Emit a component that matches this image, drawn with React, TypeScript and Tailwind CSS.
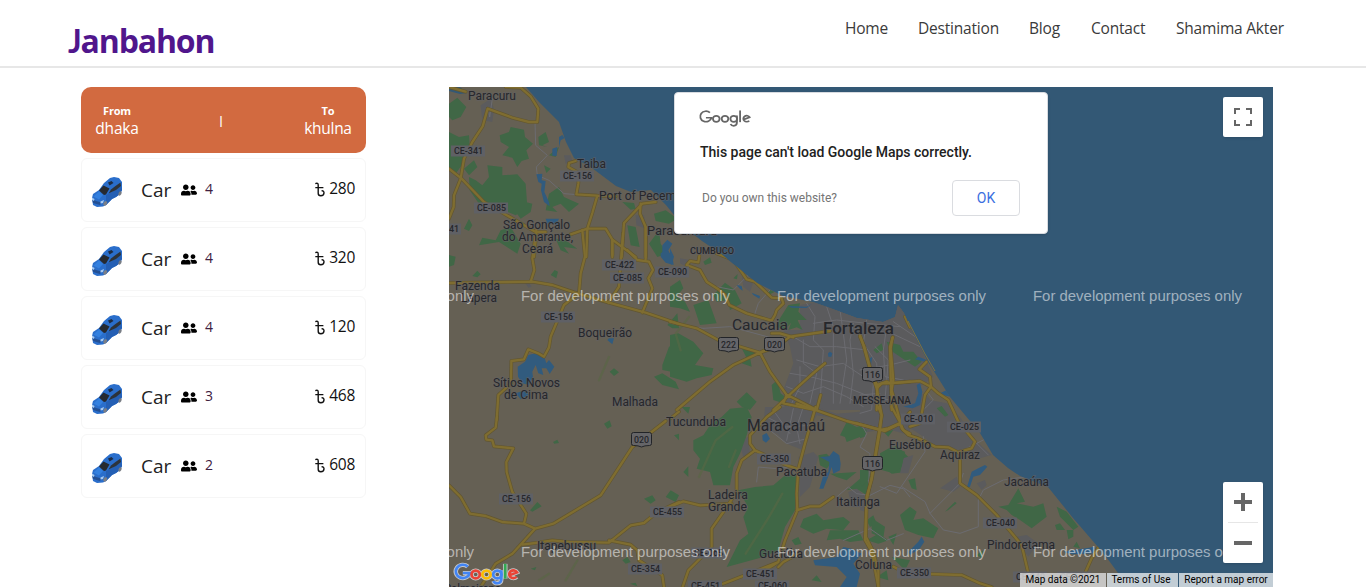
import { FaUserFriends } from "react-icons/fa";

const navItems = [
  { label: "Home", box: "w-[43px]" },
  { label: "Destination", box: "w-[81px]" },
  { label: "Blog", box: "w-8" },
  { label: "Contact", box: "w-[55px]" },
  { label: "Shamima Akter", box: "w-[108px]" },
];

const rides = [
  { seats: 4, price: 280 },
  { seats: 4, price: 320 },
  { seats: 4, price: 120 },
  { seats: 3, price: 468 },
  { seats: 2, price: 608 },
];

// Vector patches are stored at three units per map pixel, grouped by origin.
type Patch = { x: number; y: number; green: string[]; urban: string[]; water: string[]; minor: string[]; roads: string[] };

const patches: Patch[] = [
  {
    x: 0,
    y: 0,
    green: [
      "M0 50L25 32L52 60L35 90L10 100L0 90Z",
      "M0 135L30 150L60 145L62 175L45 225L20 260L0 240Z",
      "M152 145L180 135L185 120L225 128L228 150L252 170L232 190L240 215L218 222L205 240L190 212L160 205L180 180L155 165Z",
      "M45 245L75 220L85 240L60 265Z",
      "M115 235L160 240L160 265L205 262L230 290L235 360L200 385L170 372L130 355L90 350L62 310L60 270L80 280L100 295L120 270Z",
      "M268 150L290 135L300 165L280 175L295 180L270 175Z",
      "M300 205L330 180L320 210Z M285 235L305 245L292 258Z",
      "M300 320L330 300L345 330L390 350L360 375L335 350L310 360L325 375L290 370Z",
      "M200 375L230 345L250 350L245 375L215 395Z",
      "M155 430L185 420L215 470L205 500L150 465L90 475L100 452L140 460Z",
      "M45 425L60 395L70 415L60 432Z M320 455L350 460L385 485L345 480L360 500L335 490Z",
      "M520 345L555 348L560 365L545 368Z M535 415L560 420L572 480L545 475Z M615 380L650 370L685 395L660 410L620 402Z",
      "M600 470L630 430L635 470L655 500L625 510Z",
    ],
    urban: ["M95 55L125 35L135 65L130 105L100 100Z M345 205L365 205L370 225L350 230Z M560 385L585 385L592 425L562 415Z"],
    water: [
      "M330 150L340 144L347 153L335 160L330 180Z M310 185L325 180L323 207L310 206Z",
      "M262 262L280 260L278 280L290 282L286 315L300 345L302 358L285 345L276 310L278 290L268 285Z",
      "M640 475L655 458L670 470L658 490L665 510L640 510Z M290 395L330 395L325 405L335 425L315 408L295 410Z",
    ],
    minor: ["M258 105L260 175L295 205L262 240L265 265L300 280L345 320L385 323", "M118 65L122 90L130 35"],
    roads: [
      "M170 0L215 2L245 28L268 65L265 105L240 105L190 92L116 65L101 118L70 165L45 215L35 275L15 325L14 360L0 395",
      "M0 245L38 275L105 345L200 400L260 435L290 435",
      "M0 0L50 14",
      "M380 222L360 228L358 240L390 258L388 290L382 322L445 326L500 328",
      "M445 326L430 378L415 425L412 510",
      "M365 442L415 425L470 425L490 458L560 510",
      "M620 345L580 350L525 408L518 510",
      "M575 350L573 380L590 420L590 510 M490 460L490 510 M262 440L255 510",
    ],
  },
  {
    x: 0,
    y: 489,
    green: [
      "M0 15L20 20L15 45L0 50Z M70 78L85 62L95 73L85 82Z M305 75L317 60L327 65L322 85Z",
      "M482 365L495 355L510 367L495 378Z M640 345L660 290L690 280L690 370L640 360Z",
      "M615 380L640 370L680 395L690 418L640 405Z M655 225L685 190L690 235L670 235Z",
    ],
    urban: ["M228 98L240 98L248 110L238 113Z"],
    water: [
      "M206 350L228 335L238 315L260 310L285 318L292 340L300 330L316 350L302 372L292 355L278 355L283 375L268 370L260 345L250 365L252 382L240 405L220 400L207 380Z",
      "M635 10L650 0L670 15L674 45L650 38L635 20Z M480 265L495 265L490 283L475 270Z M200 430L230 420L240 435L215 448Z",
    ],
    minor: [],
    roads: [
      "M0 99L120 97L250 95L310 105L375 127L480 158L590 188L690 222",
      "M262 -60L250 25L256 60L245 95",
      "M400 -60L408 20L395 70L390 130L345 165L305 260L300 292L285 320L268 310L238 298L225 328L187 333L186 400L148 435L143 510",
      "M522 -50L510 110L478 158 M535 0L565 30L600 35L612 60L598 85L610 115L580 188",
      "M590 -70L590 28 M490 -30L490 15 M665 505L690 485",
    ],
  },
  {
    x: 0,
    y: 990,
    green: [
      "M465 20L482 10L488 28L475 35Z M312 75L325 68L330 78L316 80Z M243 280L265 255L278 268L250 284Z",
      "M585 245L610 235L620 250L605 260Z M650 240L665 220L690 235L680 255Z M675 55L690 50L690 70Z",
      "M520 430L535 420L545 435L530 440Z M543 500L560 497L565 508Z M245 455L262 450L258 460Z",
    ],
    urban: [],
    water: [],
    minor: [],
    roads: [
      "M144 0L140 32L110 55L112 68L130 70L135 88L193 94L172 135L173 165L190 225L232 290L225 320L258 335L313 320L455 235L550 90L650 12",
      "M0 205L35 240L63 290L110 297L160 315L225 320",
      "M258 335L190 410L140 440L95 510",
      "M220 383L258 378L310 370L360 375L480 377L545 325L585 318L625 285L690 255",
      "M480 370L545 383L565 400L570 430L640 475L645 510",
    ],
  },
  {
    x: 663,
    y: 429,
    green: [
      "M100 95L120 82L125 98L105 105Z M190 145L203 132L201 148Z M130 195L165 158L195 180L215 220L180 240L175 210L140 215Z",
      "M0 170L30 150L40 175L20 200L45 215L60 245L30 235L0 230Z M70 225L115 210L140 280L90 285Z",
      "M330 265L355 225L390 220L385 245L410 270L370 270L345 300L320 290Z",
      "M355 300L375 248L385 275L398 300L380 292Z M290 185L300 180L315 185L295 195Z",
      "M0 315L25 310L70 335L100 370L75 405L130 415L125 435L80 445L50 455L0 440Z",
      "M215 355L265 365L240 380L245 410L215 400L228 380Z M305 465L322 450L332 490L345 500L340 520L310 510Z",
      "M200 515L230 487L260 515L240 540L215 530Z M612 365L625 345L642 340L635 362Z M665 340L690 335L720 365L715 380L685 360Z",
    ],
    urban: [
      "M390 225L440 215L560 260L640 275L680 260L690 228L720 290L720 540L345 540L340 480L370 400L360 350L340 300L390 300Z",
      "M215 130L250 155L240 185L220 170Z M30 85L60 90L50 110L30 100Z",
    ],
    water: [
      "M0 55L12 80L5 105L0 100Z M200 165L215 168L218 182L208 175Z M355 228L410 230L425 222L410 234L365 233Z",
      "M474 370L480 365L487 370L484 380L475 380Z M245 188L270 198L268 206L250 195Z",
    ],
    minor: [
      "M100 295L180 290L310 325L350 325 M300 180L265 220L255 250 M140 170L190 180L240 130 M0 280L100 295",
      "M390 410L390 470L360 530 M410 220L435 260L430 330L460 360L450 520 M370 320L420 350L500 350L590 360 M430 280L500 270L590 280L690 290 M470 230L490 290L490 520",
      "M360 430L420 440L500 460L600 500L720 520 M380 390L450 410L520 400L580 440 M510 240L520 310L530 390L510 520 M350 470L400 490L460 470L530 500L580 530",
      "M590 270L580 340L620 400L625 470 M650 290L640 360L645 440L700 450 M550 280L540 330L550 430L540 520 M400 330L400 400L440 430L420 520",
    ],
    roads: [
      "M88 78L85 97L60 93L50 105L90 120L110 155L145 178L165 195L178 225L230 250L305 272L315 255L320 240L340 220L335 205L305 203L255 155L230 148L190 90L140 70",
      "M0 275L80 295L145 330L270 368L320 350L360 320L480 303",
      "M20 540L120 455L190 405L270 368L330 338 M310 540L390 465L435 425L465 400",
      "M270 368L300 425L350 495L340 520L435 540",
      "M352 495L440 540L452 495 M305 310L330 310L370 322",
      "M570 320L583 350L600 412L622 470L620 540 M668 322L660 350L665 540",
      "M620 465L650 455L660 460L720 455 M705 260L720 292",
    ],
  },
  {
    x: 663,
    y: 960,
    green: [
      "M70 100L100 85L120 55L155 30L180 5L230 0L245 30L230 85L210 140L190 180L180 235L130 235L120 195L80 185L90 155L70 130Z",
      "M35 0L60 0L55 20Z M40 195L55 178L55 210Z",
      "M235 300L205 250L255 240L310 235L345 205L385 200L375 310L345 360L325 430L280 450L225 465L170 480L210 400L235 380L220 330Z",
      "M510 85L530 45L560 60L590 50L570 90L530 105L525 90Z M445 145L470 140L490 160L470 185L450 175Z",
      "M480 200L560 195L530 220L500 210Z M400 335L440 320L460 340L520 330L540 345L520 370L470 365L430 380L390 360Z",
      "M480 370L565 370L580 400L540 405L510 395L470 400Z M530 250L570 215L600 225L590 265L560 245Z",
      "M635 145L680 115L715 150L705 195L665 200L640 180Z M590 400L625 380L655 400L625 410Z M590 340L610 325L620 350L600 360Z",
      "M620 510L650 490L655 520Z M425 520L440 505L455 525Z M665 450L720 460L705 490Z",
      "M365 400L385 390L395 410L375 415Z M700 15L720 5L720 35Z",
    ],
    urban: [
      "M285 0L440 0L500 20L620 10L720 30L720 85L650 65L560 45L440 25L410 90L400 130L350 110L320 80L280 65Z",
      "M205 100L235 90L240 145L220 150Z M385 150L430 135L445 150L420 240L390 270Z M535 255L560 245L600 280L580 300L545 300Z",
    ],
    water: [
      "M277 85L290 78L300 95L288 107L278 100Z M478 148L490 132L508 145L512 170L510 190L490 200L485 180L478 200L460 245L448 245L460 205L475 195L478 165L450 150Z",
      "M430 460L500 450L520 420L545 425L575 440L550 470L570 500L560 540L510 540L530 510L500 480L435 475Z",
    ],
    minor: [
      "M260 225L265 180L320 185L360 180 M300 70L350 110L410 95 M290 30L350 60L420 55 M310 10L360 80 M370 5L350 100 M400 0L380 60L390 110",
      "M500 270L535 240L560 260L600 265L660 235L700 245L720 270 M570 45L590 80L570 120L600 140L595 260 M520 400L600 365L650 400L700 380",
    ],
    roads: [
      "M330 0L290 30L240 85L240 110L255 130L215 160L200 200L200 255L160 315L125 365L125 420L55 490L38 540",
      "M240 110L255 130L350 175L380 185 M10 295L40 283L90 295L185 290",
      "M437 0L405 110L385 185L380 260L382 310L345 400L325 465L160 530L85 540",
      "M380 310L420 298L450 298L490 270 M325 465L285 490",
      "M380 -10L440 10L530 42L645 72L690 50L720 15",
      "M625 0L635 25L605 210L590 280L588 390L608 430L625 490L625 540",
      "M665 0L690 45L700 70L720 80 M385 440L340 465L325 480",
    ],
  },
  {
    x: 1233,
    y: 639,
    green: [
      "M80 125L120 135L130 155L160 155L185 185L165 200L120 170L90 150Z M40 150L65 130L70 150L50 160Z",
      "M230 325L245 318L265 345L255 350Z M60 460L95 440L135 455L125 500L100 520L65 510Z M145 540L165 535L170 570L155 565Z",
      "M120 645L150 620L170 635L160 660L190 655L235 685L220 715L175 705L135 690Z M255 635L285 605L290 610L265 630Z",
      "M415 620L445 615L475 565L495 605L470 610L520 620L550 610L560 650L515 685L480 660L455 645L440 630Z",
      "M585 675L600 670L615 690L590 690Z M590 620L620 635L655 680L640 690L600 650Z M620 690L640 690L640 710L625 718Z M640 740L650 725L660 745Z",
      "M0 510L25 510L30 535L5 560L0 540Z M35 655L75 680L70 715L35 700Z M85 710L110 700L100 735Z",
      "M350 765L370 750L365 775Z M0 380L20 390L15 410L0 415Z M70 395L100 390L85 410Z",
    ],
    urban: [
      "M0 55L55 65L100 55L110 10L135 35L180 140L220 230L180 260L160 330L120 380L0 400Z",
      "M125 310L195 280L210 300L260 310L300 350L345 420L395 465L360 475L300 450L230 440L175 400L135 375Z",
      "M470 710L500 705L535 730L505 770L480 735Z M130 475L160 465L145 520L120 520Z M240 565L290 530L300 560L280 575Z M350 550L375 540L380 555L365 570Z M0 590L20 595L15 635L0 630Z",
    ],
    water: [
      "M170 255L180 250L187 275L180 315L158 325L130 320L165 310L175 280Z M230 285L260 270L270 290L250 285Z",
      "M320 565L335 515L355 505L375 495L382 500L360 525L340 530L330 560Z M145 755L175 725L185 710L193 725L180 745L150 765Z",
      "M30 175L37 170L33 195L25 190Z M175 170L200 180L195 185L165 178Z M610 755L705 740L715 760L635 763Z",
    ],
    minor: [
      "M100 65L180 120 M20 90L95 100L180 140 M0 210L90 195L150 180 M40 250L35 330L0 340 M45 140L85 180L75 300 M0 285L60 280",
      "M60 560L110 580L195 455L190 410 M125 560L195 605L210 640L300 550L310 520 M210 640L250 690L300 700L355 680L355 600L370 570L430 540L500 530",
      "M180 340L220 300L205 280 M350 430L385 465 M300 455L370 420 M700 240L710 250",
    ],
    roads: [
      "M0 105L10 135L28 200L50 265L65 345L60 390L35 540L20 590L15 720L35 755L55 861",
      "M98 112L92 145L100 240L95 270L118 355L125 385L145 405L175 415L225 440L265 442L300 460",
      "M50 265L65 250L80 250L180 243L215 262L235 280L265 300L295 365L345 425L335 445L300 455L300 550L350 585L410 645L485 735L505 820",
      "M200 185L178 208L210 230L213 260L195 285L180 370L150 380",
      "M-10 370L60 390L85 385L118 370",
      "M100 800L120 810 M210 822L305 825L360 850L395 861 M720 735L695 775L675 820",
    ],
  },
];

const labels: [string, number, number, number, number, number?][] = [
  ["Paracuru", 468, 100.4, 12, 48],
  ["Taiba", 577, 168.4, 12, 29],
  ["Port of Pecem", 599, 200.4, 12, 77],
  ["Paracumuru", 647, 235.4, 12, 70],
  ["São Gonçalo", 503, 229.4, 12, 67],
  ["do Amarante,", 502, 241.4, 12, 71],
  ["Ceará", 522, 253.4, 12, 31],
  ["CUMBUCO", 690, 254, 9, 44, 500],
  ["Fazenda", 455, 290.4, 12, 45],
  ["Lapera", 461, 302.4, 12, 36],
  ["Boqueirão", 578, 337.4, 12, 54],
  ["Sítios Novos", 493, 387.4, 12, 67],
  ["de Cima", 504, 399.4, 12, 44],
  ["Malhada", 612, 406.4, 12, 46],
  ["Tucunduba", 666, 426.4, 12, 60],
  ["Caucaia", 732, 330.4, 15, 56],
  ["Fortaleza", 823, 334, 17, 71, 500],
  ["MESSEJANA", 853, 404.4, 10, 58, 500],
  ["Maracanaú", 747, 431.4, 16, 78],
  ["Pacatuba", 776, 476.4, 12, 51],
  ["Ladeira", 708, 499.4, 12, 40],
  ["Grande", 708, 511.4, 12, 39],
  ["Itaitinga", 836, 506.4, 12, 44],
  ["Guaiúba", 759, 558.4, 12, 44],
  ["Coluna", 855, 569.4, 12, 37],
  ["Eusébio", 889, 449.4, 12, 42],
  ["Aquiraz", 940, 459.4, 12, 40],
  ["Jacaúna", 1004, 486.4, 12, 45],
  ["Pindoretama", 987, 549.4, 12, 68],
  ["Itapebussu", 537, 550.4, 12, 59],
  ["Palmeirana", 444, 593, 12, 57],
];

const badges: [string, number, number][] = [
  ["CE-341", 468, 151],
  ["CE-156", 577, 176],
  ["CE-085", 491, 208],
  ["CE-341", 444, 229],
  ["CE-422", 619, 265],
  ["CE-085", 627, 278],
  ["CE-090", 672, 272],
  ["CE-156", 558, 317],
  ["CE-156", 516, 499],
  ["CE-455", 667, 512],
  ["CE-354", 645, 569],
  ["CE-350", 774, 459],
  ["CE-065", 708, 553],
  ["CE-451", 760, 574],
  ["CE-451", 705, 586],
  ["CE-060", 772, 586],
  ["CE-010", 918, 419],
  ["CE-025", 964, 427],
  ["CE-040", 1000, 523],
  ["CE-350", 914, 573],
  ["CE-040", 1030, 577],
  ["CE-138", 1074, 577],
];

const shields: [string, number, number][] = [
  ["222", 728, 344],
  ["020", 774, 344],
  ["116", 872, 374],
  ["116", 872, 463],
  ["020", 641, 439],
];

function Terrain() {
  return (
    <svg className="block h-[500px] w-[824px]" viewBox="449 87 824 500" aria-hidden="true">
      <defs>
        <clipPath id="land">
          <path d="M449 87H526L539 102L559 122L566 142L574 158L592 168L616 186L631 192L651 190L666 205L683 226L702 241L720 253L737 267L757 283L783 296L813 302L830 308L857 318L883 322L895 317L898 305L904 313L910 327L927 360L950 397L980 433L993 455L1008 468L1020 476L1048 487L1073 518L1098 547L1110 562L1118 573L1132 587H449Z" />
        </clipPath>
      </defs>
      <path fill="#335875" d="M449 87H1273V587H449Z" />
      <g clipPath="url(#land)">
        <path fill="#656054" d="M449 87H1273V587H449Z" />
        <path d="M449 87H460L467 93L460 94L449 91Z" fill="#335875" />
        <g transform="translate(449 87) scale(0.33333)" fill="none" strokeLinejoin="round" strokeLinecap="round">
          {patches.map((p, i) => (
            <g key={i} transform={`translate(${p.x} ${p.y})`}>
              <path d={p.urban.join("")} fill="#5b5b5d" />
              <path d={p.green.join("")} fill="#406746" />
            </g>
          ))}
          <path d="M750 1170L800 1060L850 1020M890 1400L960 1290L1000 1220M720 690L680 740L695 790M860 1090L840 1140M480 810L450 880M300 1460L270 1480M385 1420L350 1480" stroke="#596744" strokeWidth="7" strokeOpacity="0.6" />
          {patches.map((p, i) => (
            <g key={i} transform={`translate(${p.x} ${p.y})`}>
              <path d={p.minor.join("")} stroke="#6b6b70" strokeWidth="3" />
              <path d={p.water.join("")} fill="#315b7e" />
            </g>
          ))}
          {patches.map((p, i) => (
            <g key={i} transform={`translate(${p.x} ${p.y})`}>
              <path d={p.roads.join("")} stroke="#625630" strokeWidth="11" />
            </g>
          ))}
          {patches.map((p, i) => (
            <g key={i} transform={`translate(${p.x} ${p.y})`}>
              <path d={p.roads.join("")} stroke="#7f6d30" strokeWidth="7" />
            </g>
          ))}
        </g>
      </g>
      <path d="M908 321L925 354L935 371" stroke="#80703f" fill="none" />
      <g className="font-['Roboto',sans-serif]">
        {badges.map(([t, x, y], i) => (
          <g key={i}>
            <path d={`M${x - 17} ${y - 5.5}h34v11h-34z`} fill="#5f6065" />
            <text x={x - 14} y={y + 3.4} fontSize="9.5" fontWeight="500" textLength="29" lengthAdjust="spacingAndGlyphs" fill="#26272b">{t}</text>
          </g>
        ))}
        {shields.map(([t, x, y], i) => (
          <g key={i}>
            <path d={`M${x - 7.5} ${y - 6.5}h16q2 0 2 2v9q0 2 -2 2q-5 0 -8 1.5q-3 -1.5 -8 -1.5q-2 0 -2 -2v-9q0 -2 2 -2z`} fill="#656568" stroke="#222428" />
            <text x={x - 7} y={y + 4} fontSize="9.5" fontWeight="500" textLength="15" lengthAdjust="spacingAndGlyphs" fill="#26272b">{t}</text>
          </g>
        ))}
        {labels.map(([t, x, y, size, width, weight], i) => (
          <text key={i} x={x} y={y} fontSize={size} fontWeight={weight ?? 400} textLength={width} lengthAdjust="spacingAndGlyphs" fill="#26272b" stroke="#626164" strokeWidth="1.5" strokeOpacity="0.7" paintOrder="stroke">{t}</text>
        ))}
      </g>
      <g className="font-['Liberation_Sans',sans-serif]" fill="#fff" fillOpacity="0.54" fontSize="15">
        {[301, 557].map((y) =>
          [265, 521, 777, 1033].map((x) => (
            <text key={`${x}-${y}`} x={x} y={y} textLength="209" lengthAdjust="spacingAndGlyphs">For development purposes only</text>
          ))
        )}
      </g>
    </svg>
  );
}

function CarIcon() {
  return (
    <svg className="h-[30px] w-[31px] shrink-0" viewBox="0 0 31 30" aria-hidden="true">
      <path d="M0 21L1 17L7 13L12 6L18 1L22 0L27 1L30 5L30 13L28 17L24 20L20 22L14 28L11 29.5L5 30L1 28Z" fill="#2a6ecb" />
      <path d="M14 18L20 15L29 9L30 13L28 17L24 20L20 22L14 28Z" fill="#245fb4" />
      <path d="M7 13.5L11.5 8.5L17.5 11.5L14 17.5L12 18Z" fill="#262a30" />
      <path d="M16 5.5L19.5 4L21.5 6L17.5 8.5Z" fill="#1d2c44" />
      <path d="M16.5 16.5L19 12.5L23.5 9L28.5 5.5L29 9L24 13Z" fill="#2d333a" />
      <path d="M1.5 19.5L7 14.5L11 18L7 22.5Z" fill="#3380df" />
      <path d="M0 22L4 24L9.5 25.5L8 28L1 26Z" fill="#234f93" />
      <path d="M0 20.5L2.5 22L2 24L0 23ZM8.5 24.5L12 23L11 26L8.5 26.5Z" fill="#a9cbf0" />
      <ellipse cx="13.2" cy="26.3" rx="1.7" ry="2.5" transform="rotate(30 13.2 26.3)" fill="#7b7f86" />
      <ellipse cx="28" cy="16.5" rx="1.4" ry="2.3" transform="rotate(30 28 16.5)" fill="#777c84" />
    </svg>
  );
}

function GoogleLogo({ mono }: { mono?: boolean }) {
  const colours = mono
    ? ["#666", "#666", "#666", "#666", "#666", "#666"]
    : ["#4285f4", "#ea4335", "#fbbc05", "#4285f4", "#34a853", "#ea4335"];
  const marks = (
    <>
      <path d="M17 5A7.2 7.2 0 1 0 19 12H12" stroke={colours[0]} />
      <circle cx="25" cy="13.5" r="4.2" stroke={colours[1]} />
      <circle cx="36" cy="13.5" r="4.2" stroke={colours[2]} />
      <path d="M51 9V18.5Q51 23 47 23Q44 23 43 20.5" stroke={colours[3]} />
      <circle cx="47" cy="13.5" r="4.2" stroke={colours[3]} />
      <path d="M55 2V18" stroke={colours[4]} />
      <path d="M59 14.5L67 11.3A4.2 4.2 0 1 0 66.5 16" stroke={colours[5]} />
    </>
  );
  return (
    <svg className={mono ? "h-[19px] w-[54px]" : "h-6 w-[67px]"} viewBox="2 0 68 26" preserveAspectRatio="none" fill="none" role="img" aria-label="Google">
      {!mono && <g className="[&>*]:stroke-[#c7c9cc]" strokeWidth="4.6">{marks}</g>}
      <g strokeWidth={mono ? 2.3 : 2.8}>{marks}</g>
    </svg>
  );
}

export default function App() {
  return (
    <div className="flex h-screen flex-col overflow-hidden bg-white font-['Open_Sans',sans-serif]">
      <header className="flex h-[68px] shrink-0 items-start justify-between border-b-2 border-[#e7e7e7] pr-[83px] pl-[68px]">
        <h1 className="mt-[18px] text-[32px] leading-[46px] font-bold tracking-[-1.15px] text-[#50168c]"><span className="font-['Lato',sans-serif]">J</span>anbahon</h1>
        <nav className="mt-4 flex gap-[30px] text-[15.5px] leading-6 tracking-[-0.2px] text-[#3a3a3a]">
          {navItems.map((n) => (
            <a key={n.label} href="#" className={`${n.box} pl-px whitespace-nowrap`}>{n.label}</a>
          ))}
        </nav>
      </header>
      <main className="flex items-start gap-[83px] pt-[19px] pl-[81px]">
        <section className="flex w-[285px] flex-col gap-[5px]">
          <div className="flex h-[66px] items-center justify-between rounded-[10px] bg-[#d26a40] px-[14px] text-white">
            <div className="flex w-11 flex-col items-center">
              <div className="pt-px text-[11px] leading-[15px] font-bold tracking-[-0.2px]">From</div>
              <div className="text-[15.5px] leading-5 tracking-[-0.2px]">dhaka</div>
            </div>
            <div className="pt-[3px] pr-px text-sm">l</div>
            <div className="flex w-12 flex-col items-center">
              <div className="pt-px text-[11px] leading-[15px] font-bold tracking-[-0.2px]">To</div>
              <div className="text-[15.5px] leading-5 tracking-[-0.3px]">khulna</div>
            </div>
          </div>
          {rides.map((r, i) => (
            <div key={i} className="flex h-16 items-center rounded-md border border-[#f6f6f6] px-[10px]">
              <div className="pt-1"><CarIcon /></div>
              <span className="ml-[18px] w-8 text-[19px] leading-7 text-[#222]">Car</span>
              <FaUserFriends className="ml-2 size-4 text-black" />
              <span className="mb-0.5 ml-2 text-sm text-[#402040]">{r.seats}</span>
              <span className="mb-0.5 ml-auto flex items-center text-[15.5px] tracking-[-0.3px] text-[#111]">
                <svg className="mr-1 h-[15px] w-[10px]" viewBox="0 0 10 15" fill="none" stroke="#111" strokeWidth="1.4" aria-label="Taka" role="img">
                  <path d="M0.3 1.6Q3.2 0.6 3.2 3V11.2Q3.2 13.7 5.8 13.7Q9 13.7 9 10.8Q9 8.6 6.6 8.8M0.3 5.6H8.4" />
                </svg>
                {r.price}
              </span>
            </div>
          ))}
        </section>
        <section className="relative h-[500px] w-[824px] overflow-hidden">
          <Terrain />
          <div className="absolute top-[5px] left-[225px] flex h-[142px] w-[374px] flex-col rounded-[4px] border border-[#d8dbe0] bg-white font-['Roboto',sans-serif] shadow">
            <div className="mt-4 ml-[23px]"><GoogleLogo mono /></div>
            <p className="mt-[14px] ml-[25px] text-[14px] leading-5 font-medium whitespace-nowrap text-[#212121]">This page can't load Google Maps correctly.</p>
            <div className="mt-[18px] flex items-center justify-between pr-[27px] pl-[27px]">
              <span className="text-[12px] text-[#757575]">Do you own this website?</span>
              <button className="h-9 w-[68px] rounded-[4px] border border-[#dadce0] text-sm text-[#3b6fe0]">OK</button>
            </div>
          </div>
          <div className="absolute top-[10px] right-[10px] flex size-10 items-center justify-center rounded-[2px] bg-white shadow">
            <svg className="size-[18px]" viewBox="0 0 18 18" fill="#666"><path d="M0 0H6V2H2V6H0ZM12 0H18V6H16V2H12ZM0 12H2V16H6V18H0ZM16 12H18V18H12V16H16Z" /></svg>
          </div>
          <div className="absolute top-[395px] right-[10px] flex h-[81px] w-10 flex-col items-center rounded-[2px] bg-white shadow">
            <div className="flex h-10 items-center"><svg className="size-[18px]" viewBox="0 0 18 18" fill="#666"><path d="M7 0H11V7H18V11H11V18H7V11H0V7H7Z" /></svg></div>
            <div className="h-px w-[30px] bg-[#e6e6e6]" />
            <div className="flex h-10 items-center"><svg className="h-1 w-[18px]" viewBox="0 0 18 4" fill="#666"><path d="M0 0H18V4H0Z" /></svg></div>
          </div>
          <div className="absolute bottom-[1px] left-[4px]"><GoogleLogo /></div>
          <div className="absolute right-0 bottom-0 flex h-[14px] gap-px font-['Roboto',sans-serif] text-[10px] leading-[14px] whitespace-nowrap text-black">
            <span className="w-[86px] bg-[#dedede]/80 text-center">Map data ©2021</span>
            <span className="w-[71px] bg-[#d2dae0]/90 pr-[3px] text-center">Terms of Use</span>
            <span className="w-[94px] bg-[#d2dae0]/90 text-center">Report a map error</span>
          </div>
        </section>
      </main>
    </div>
  );
}
